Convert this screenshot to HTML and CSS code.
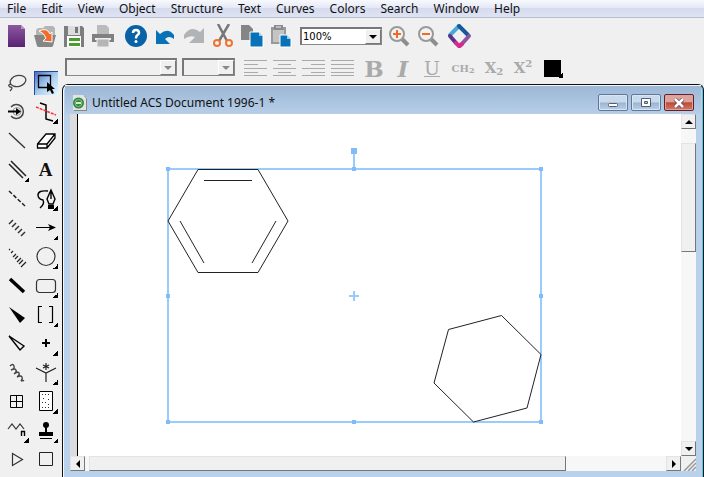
FILE: index.html
```html
<!DOCTYPE html>
<html lang="en">
<head>
  <meta charset="utf-8">
  <title>Untitled ACS Document 1996-1</title>
  <link rel="stylesheet" href="styles.css">
</head>
<body>
  <nav class="menu">
    <a href="#">File</a>
    <a href="#">Edit</a>
    <a href="#">View</a>
    <a href="#">Object</a>
    <a href="#">Structure</a>
    <a href="#">Text</a>
    <a href="#">Curves</a>
    <a href="#">Colors</a>
    <a href="#">Search</a>
    <a href="#">Window</a>
    <a href="#">Help</a>
  </nav>

  <div class="toolbar">
    <button aria-label="New"><svg width="24" height="24" viewBox="0 0 24 24"><defs><linearGradient id="purple" x2="0" y2="1"><stop offset="0" stop-color="#8a5a9f"/><stop offset="1" stop-color="#5a2173"/></linearGradient></defs><path d="M4 1h13l4 4v18H4z" fill="url(#purple)"/><path d="M17 1v4h4z" fill="#b493c2"/></svg></button>
    <button aria-label="Open"><svg width="24" height="24" viewBox="0 0 24 24"><path d="M3 11V6l2-2h5l2-2h8l2 2v7" fill="#b5b5b5"/><path d="M1 11h22l-3 11q0 1-2 1H6q-2 0-2-1z" fill="#868686"/><path d="M6 7q8-4 11 3l2-2v10l-9-1 3-3q-2-5-7-7z" fill="#f26b2a" stroke="#fff"/></svg></button>
    <button aria-label="Save"><svg width="24" height="24" viewBox="0 0 24 24"><path d="M2 2h18l2 2v19H2z" fill="#7d7d7d"/><path d="M6 2h12v9H6z" fill="#ddd"/><path d="M13 3h3v6h-3z" fill="#777"/><path d="M5 12h14v11H5z" fill="#fff"/><path d="M7 14h11v3H7zM7 19h11v3H7z" fill="#4b9b2e"/></svg></button>
    <button aria-label="Print"><svg width="24" height="24" viewBox="0 0 24 24"><path d="M6 1h9l3 3v6H6z" fill="#bbb"/><path d="M1 10h22v8H1z" fill="#808080"/><path d="M4 14h16v2H4z" fill="#eee"/><path d="M6 15h12v8H6z" fill="#b5b5b5" stroke="#eee"/></svg></button>
    <button class="push" aria-label="Help"><svg width="24" height="24" viewBox="0 0 24 24"><circle cx="12" cy="12" r="11" fill="#0862a5"/><path d="M9 9q0-3 3-3t3 3q0 1-1.500 2T12 14.500" fill="none" stroke="#fff" stroke-width="2.500"/><circle cx="12" cy="17.500" r="1.500" fill="#fff"/></svg></button>
    <button aria-label="Undo"><svg width="24" height="24" viewBox="0 0 24 24"><path d="M3 6l4 4q8-7 14 1v4q-5-4-9 0l5 5H3z" fill="#0872b8"/></svg></button>
    <button aria-label="Redo"><svg width="24" height="24" viewBox="0 0 24 24"><path d="M22 4l-4 4Q9 1 2 11v4q6-4 11-2l-6 6h15z" fill="#b0b4b6"/></svg></button>
    <button aria-label="Cut"><svg width="24" height="24" viewBox="0 0 24 24"><path d="M7 0l9 17M18 0L8 17" stroke="#777" stroke-width="2.500"/><g fill="none" stroke="#f17332" stroke-width="2"><circle cx="6" cy="19" r="3"/><circle cx="18" cy="19" r="3"/></g></svg></button>
    <button aria-label="Copy"><svg width="24" height="24" viewBox="0 0 24 24"><path d="M1 1h8l4 4v11H1z" fill="#858585"/><path d="M10 8h9l4 4v11H10z" fill="#0872b8" stroke="#fff"/><path d="M19 8v4h4z" fill="#9ccce9"/></svg></button>
    <button aria-label="Paste"><svg width="24" height="24" viewBox="0 0 24 24"><path d="M2 3h15v17H2z" fill="#999"/><path d="M4 6h11v12H4z" fill="#c4c4c4"/><path d="M5 1h9v5H5z" fill="#8a8a8a"/><path d="M7 3h5" stroke="#eee"/><path d="M11 11h7l4 4v8H11z" fill="#0872b8" stroke="#fff"/><path d="M18 11v4h4z" fill="#9ccce9"/></svg></button>
    <div class="combo zoom"><input aria-label="Zoom" value="100%"><button aria-label="Zoom levels"><svg width="8" height="4" viewBox="0 0 8 4"><path d="M0 0h8L4 4z"/></svg></button></div>
    <button aria-label="Zoom in"><svg width="24" height="24" viewBox="0 0 24 24"><path d="M15 15l6 6" stroke="#8d8d8d" stroke-width="4"/><circle cx="10" cy="10" r="7" fill="#f2f2f2" stroke="#999" stroke-width="2"/><path d="M6 10h8M10 6v8" stroke="#f06b27" stroke-width="2"/></svg></button>
    <button aria-label="Zoom out"><svg width="24" height="24" viewBox="0 0 24 24"><path d="M15 15l6 6" stroke="#8d8d8d" stroke-width="4"/><circle cx="10" cy="10" r="7" fill="#f2f2f2" stroke="#999" stroke-width="2"/><path d="M6 10h8" stroke="#f06b27" stroke-width="2"/></svg></button>
    <button aria-label="Online"><svg width="28" height="26" viewBox="0 0 28 26"><g fill="none" stroke-width="4" stroke-linecap="round" stroke-linejoin="round"><path d="M5 12l9-9" stroke="#49a8d8"/><path d="M14 3l9 9" stroke="#17579e"/><path d="M24 13l-9 10" stroke="#9055a0"/><path d="M5 13l6 7" stroke="#5b318a"/><path d="M11 20l3 3 3-2" stroke="#d42b8c"/></g></svg></button>
  </div>

  <div class="main">
    <aside class="palette">
      <button aria-label="Lasso"><svg width="24" height="24" viewBox="0 0 24 24"><g fill="none" stroke="#444" stroke-width="1.300"><ellipse cx="13" cy="10" rx="8" ry="5.500" transform="rotate(-15 13 10)"/><path d="M6 13q-4 1-1 3 4 0 0 4"/></g></svg></button>
      <button class="on" aria-label="Marquee"><svg width="24" height="24" viewBox="0 0 24 24"><path d="M4.500 4.500h12v12h-12z" fill="none" stroke="#000" stroke-width="1.300"/><path d="M13 11v10l3-2 2 4 2-1-2-4h3z"/></svg></button>
      <button aria-label="Rotate 3D"><svg width="24" height="24" viewBox="0 0 24 24"><path d="M6 7a7 7 0 1 1 0 9" fill="none" stroke="#444" stroke-width="1.500"/><circle cx="12" cy="11.500" r="4" fill="none" stroke="#999"/><path d="M3 11.500h9" stroke="#000" stroke-width="2"/><path d="M11 8l5 3.500-5 3.500z"/></svg></button>
      <button class="more" aria-label="Fragmentation"><svg width="24" height="24" viewBox="0 0 24 24"><path d="M6 3l6 2v14l7 2" fill="none" stroke="#000" stroke-width="1.500"/><path d="M2 7l20 8" stroke="#f33" stroke-width="1.500" stroke-dasharray="3 1"/></svg></button>
      <button aria-label="Solid bond"><svg width="24" height="24" viewBox="0 0 24 24"><path d="M4 4l16 15" stroke="#333" stroke-width="1.400"/></svg></button>
      <button aria-label="Eraser"><svg width="24" height="24" viewBox="0 0 24 24"><path d="M3.500 15L12 5h9v4l-8 10H3.500zM3.500 15H13v4M13 15l8-10" fill="#fff" stroke="#000" stroke-width="1.300"/></svg></button>
      <button class="more" aria-label="Multiple bonds"><svg width="24" height="24" viewBox="0 0 24 24"><path d="M4 6l14 14M6 3l15 15" stroke="#222" stroke-width="1.500"/></svg></button>
      <button class="letter" aria-label="Text">A</button>
      <button aria-label="Dashed bond"><svg width="24" height="24" viewBox="0 0 24 24"><path d="M4 4l16 15" stroke="#222" stroke-width="1.500" stroke-dasharray="4 2"/></svg></button>
      <button class="more" aria-label="Pen"><svg width="24" height="24" viewBox="0 0 24 24"><path d="M14 4Q4 3 4 8q0 4 5 5 2 4-3 8M17 3l4 9-2 5h-4l-2-5zM17 3v9" fill="none" stroke="#000" stroke-width="1.400"/><path d="M14 18h6v4h-6z"/></svg></button>
      <button aria-label="Hashed bond"><svg width="24" height="24" viewBox="0 0 24 24"><path d="M8 4L4 8M11 7l-4 4M14 10l-4 4M17 13l-4 4M20 16l-4 4" stroke="#333" stroke-width="1.500"/></svg></button>
      <button class="more" aria-label="Arrow"><svg width="24" height="24" viewBox="0 0 24 24"><path d="M2 11.500h14" stroke="#000"/><path d="M14 8l8 3.500-8 3.500 2-3.500z"/></svg></button>
      <button aria-label="Hashed wedged bond"><svg width="24" height="24" viewBox="0 0 24 24"><path d="M5 4L4 5M8 6L6 8M11 9l-3 3M13 11l-3 3M16 13l-4 4M18 15l-4 4M21 17l-5 5" stroke="#222" stroke-width="1.200"/></svg></button>
      <button class="more" aria-label="Orbital"><svg width="24" height="24" viewBox="0 0 24 24"><circle cx="12" cy="11.500" r="9" fill="none" stroke="#333" stroke-width="1.200"/></svg></button>
      <button aria-label="Bold bond"><svg width="24" height="24" viewBox="0 0 24 24"><path d="M5 5l14 13" stroke="#000" stroke-width="3.500"/></svg></button>
      <button class="more" aria-label="Drawing elements"><svg width="24" height="24" viewBox="0 0 24 24"><rect x="2.500" y="5.500" width="19" height="13" rx="3" fill="none" stroke="#333" stroke-width="1.200"/></svg></button>
      <button aria-label="Wedged bond"><svg width="24" height="24" viewBox="0 0 24 24"><path d="M4 4l16 11-5 5z"/></svg></button>
      <button class="more" aria-label="Brackets"><svg width="24" height="24" viewBox="0 0 24 24"><path d="M8 3.500H4.500v16H8M15 3.500h3.500v16H15" fill="none" stroke="#000" stroke-width="1.200"/></svg></button>
      <button aria-label="Hollow wedged bond"><svg width="24" height="24" viewBox="0 0 24 24"><path d="M4 4l15 10-4 4z" fill="none" stroke="#000" stroke-width="1.400"/></svg></button>
      <button class="more" aria-label="Chemical symbols"><svg width="24" height="24" viewBox="0 0 24 24"><path d="M8 11h8M12 7v8" stroke="#000" stroke-width="2"/></svg></button>
      <button aria-label="Wavy bond"><svg width="24" height="24" viewBox="0 0 24 24"><path d="M5 5q3-3 4 0t-3 4q4-2 5 0t-2 4q4-3 5-1t-2 4q4-2 5 0t-1 4q2-1 3 0" fill="none" stroke="#444" stroke-width="1.400"/></svg></button>
      <button class="more" aria-label="Query tools"><svg width="24" height="24" viewBox="0 0 24 24"><path d="M2 7l10 5 10-5M12 12v9M12 2v7M9 4l6 3M15 4L9 7" fill="none" stroke="#222" stroke-width="1.200"/></svg></button>
      <button aria-label="Table"><svg width="24" height="24" viewBox="0 0 24 24"><path d="M5.500 5.500h12v12h-12zM11.500 5v12M5 11.500h12" fill="none" stroke="#000"/></svg></button>
      <button class="more" aria-label="Plate"><svg width="24" height="24" viewBox="0 0 24 24"><path d="M5.500 1.500h13v19h-13z" fill="#fff" stroke="#000"/><path d="M8 4.500h9M8 17.500h8M9 8.500h3M14 9.500h3M8 12.500h5M14 14.500h3" stroke="#333" stroke-dasharray="1 2"/></svg></button>
      <button class="more" aria-label="Acyclic chain"><svg width="24" height="24" viewBox="0 0 24 24"><path d="M3 10l4-5 4 5 4-5 4 5" fill="none" stroke="#333" stroke-width="1.200"/><path d="M16.500 17v-5M16 12.500h3.500V17" fill="none" stroke="#000" stroke-width="1.400"/></svg></button>
      <button class="more" aria-label="Templates"><svg width="24" height="24" viewBox="0 0 24 24"><circle cx="12" cy="6" r="3"/><path d="M11 7h2v6h6v4H5v-4h6z"/><path d="M6 19.500h12" stroke="#000"/></svg></button>
      <button aria-label="Play"><svg width="24" height="24" viewBox="0 0 24 24"><path d="M7.500 5.500l10 6-10 6z" fill="none" stroke="#333" stroke-width="1.200"/></svg></button>
      <button aria-label="Square"><svg width="24" height="24" viewBox="0 0 24 24"><path d="M5.500 4.500h13v13h-13z" fill="none" stroke="#222"/></svg></button>
    </aside>

    <div class="work">
      <div class="format">
        <div class="combo font"><input aria-label="Font" disabled><button aria-label="Fonts" disabled><svg width="8" height="4" viewBox="0 0 8 4"><path d="M0 0h8L4 4z"/></svg></button></div>
        <div class="combo size"><input aria-label="Font size" disabled><button aria-label="Sizes" disabled><svg width="8" height="4" viewBox="0 0 8 4"><path d="M0 0h8L4 4z"/></svg></button></div>
        <div class="align">
          <button aria-label="Align left"><svg width="23" height="18" viewBox="0 0 23 18"><path d="M0 1.500h23M0 5.500h14M0 9.500h23M0 13.500h14M0 16.500h23"/></svg></button>
          <button aria-label="Center"><svg width="23" height="18" viewBox="0 0 23 18"><path d="M0 1.500h23M5 5.500h13M0 9.500h23M5 13.500h13M0 16.500h23"/></svg></button>
          <button aria-label="Align right"><svg width="23" height="18" viewBox="0 0 23 18"><path d="M0 1.500h23M9 5.500h14M0 9.500h23M9 13.500h14M0 16.500h23"/></svg></button>
          <button aria-label="Justify"><svg width="23" height="18" viewBox="0 0 23 18"><path d="M0 1.500h23M0 5.500h23M0 9.500h23M0 13.500h23M0 16.500h23"/></svg></button>
        </div>
        <div class="styles">
          <button class="big"><b>B</b></button>
          <button class="big"><i>I</i></button>
          <button class="under"><u>U</u></button>
          <button class="formula">CH<small>2</small></button>
          <button>X<sub>2</sub></button>
          <button>X<sup>2</sup></button>
          <button class="color more" aria-label="Color"><span></span></button>
        </div>
      </div>

      <section class="window">
        <header class="title">
          <svg width="15" height="16" viewBox="0 0 15 16"><path d="M2 1h11l2 3v12H2z" fill="#888"/><path d="M1 0h10l3 3v12H1z" fill="#e3e3e3"/><circle cx="6.500" cy="8" r="5.500" fill="#30883b"/><circle cx="6.500" cy="8" r="3.500" fill="none" stroke="#8bc48c"/><path d="M4 8h5" stroke="#d5ecd2" stroke-width="2"/></svg>
          <h1>Untitled ACS Document 1996-1 *</h1>
          <button aria-label="Minimize"><svg width="12" height="10" viewBox="0 0 12 10"><rect x="1.500" y="5.500" width="9" height="3" rx="1" fill="#fff" stroke="#555e70"/></svg></button>
          <button aria-label="Maximize"><svg width="12" height="10" viewBox="0 0 12 10"><path d="M1.500.500h9v8h-9zM4.500 3.500h3v2h-3z" fill="#fff" fill-rule="evenodd" stroke="#555e70"/></svg></button>
          <button class="close" aria-label="Close"><svg width="12" height="10" viewBox="0 0 12 10"><path d="M2 1l8 8M10 1L2 9" stroke="#633e49" stroke-width="4"/><path d="M2 1l8 8M10 1L2 9" stroke="#fff" stroke-width="2.500"/></svg></button>
        </header>
        <div class="document">
          <div class="canvas">
            <svg width="603" height="342" viewBox="78 114 603 342">
              <g fill="none" stroke="#99cbfd" stroke-width="2">
                <path d="M168 169h373v253H168zM354 151v18M349 296h10M354 291v10"/>
              </g>
              <path d="M166 167h4v4h-4zM352 167h4v4h-4zM539 167h4v4h-4zM166 294h4v4h-4zM539 294h4v4h-4zM166 420h4v4h-4zM352 420h4v4h-4zM539 420h4v4h-4zM351 148h6v6h-6z" fill="#7fbcf8"/>
              <g fill="none" stroke="#222">
                <path d="M198 169.500h60l30 51.500-30 51.500h-60L168 221zM204 180.500h48M276 221l-24 42M180 221l24 42"/>
                <path d="M448.500 329.500l53-14 39.500 39-14 53.500-53.500 14-39.500-39z"/>
              </g>
            </svg>
          </div>
          <div class="scroll vertical">
            <button aria-label="Scroll up"><svg width="8" height="4" viewBox="0 0 8 4"><path d="M0 4h8L4 0z"/></svg></button>
            <div class="thumb"></div>
            <button aria-label="Scroll down"><svg width="8" height="4" viewBox="0 0 8 4"><path d="M0 0h8L4 4z"/></svg></button>
          </div>
          <div class="scroll horizontal">
            <button aria-label="Scroll left"><svg width="4" height="8" viewBox="0 0 4 8"><path d="M4 0v8L0 4z"/></svg></button>
            <div class="thumb"></div>
            <button aria-label="Scroll right"><svg width="4" height="8" viewBox="0 0 4 8"><path d="M0 0v8l4-4z"/></svg></button>
          </div>
          <svg class="grip" width="15" height="15" viewBox="0 0 15 15"><path d="M3 15L15 3M7 15l8-8M11 15l4-4" stroke="#999" stroke-width="1.500"/></svg>
        </div>
      </section>
    </div>
  </div>
</body>
</html>
```

FILE: styles.css
```css
* {
  box-sizing: border-box;
}
body {
  margin: 0;
  height: 100vh;
  display: flex;
  flex-direction: column;
  overflow: hidden;
  background: #f0f0f0;
  color: #111;
  font-family: "Noto Sans", sans-serif;
  font-size: 12px;
}
svg {
  display: block;
  flex: none;
}
button {
  display: flex;
  align-items: center;
  justify-content: center;
  padding: 0;
  border: 0;
  background: none;
  color: inherit;
  font: inherit;
}
.menu {
  flex: none;
  display: flex;
  gap: 15px;
  height: 18px;
  padding-left: 7px;
  line-height: 17px;
  background: linear-gradient(#f8f9fd, #e5e9f5 45%, #d5daee 50%, #dfe4f4);
  border-bottom: 1px solid #b9bdd0;
}
.menu a {
  color: #111;
  text-decoration: none;
}
.toolbar {
  flex: none;
  display: flex;
  align-items: center;
  gap: 5px;
  height: 36px;
  padding-left: 4px;
}
.toolbar .push {
  margin-left: 4px;
}
.combo {
  display: flex;
  height: 18px;
  border: 1px solid #888;
  border-top: 2px solid #777;
  border-left: 2px solid #777;
}
.combo input {
  flex: 1;
  min-width: 0;
  padding: 0 1px;
  border: 0;
  background: none;
  font-family: "DejaVu Sans", sans-serif;
  font-size: 10px;
}
.combo button {
  width: 16px;
  background: #f0f0f0;
  border: 1px solid #fff;
  border-right-color: #777;
  border-bottom-color: #777;
}
.combo button:disabled {
  fill: #888;
}
.zoom {
  width: 82px;
  margin-left: 2px;
  background: #fff;
}
.main {
  flex: 1;
  min-height: 0;
  display: flex;
}
.palette {
  flex: none;
  display: grid;
  grid-template-columns: 29px 29px;
  grid-auto-rows: 29px;
  place-items: center;
  width: 62px;
  padding: 14px 2px 0;
}
.palette button {
  width: 24px;
  height: 24px;
}
.palette .on {
  background: linear-gradient(135deg, #4c70c8, #a8cdf0 50%, #e8f8ff);
  border-top: 1px solid #234a96;
  border-left: 1px solid #234a96;
}
.palette .letter {
  font: bold 19px "Liberation Serif", serif;
}
.more {
  background: linear-gradient(135deg, transparent 50%, #000 50%) right bottom / 5px 5px no-repeat;
}
.work {
  flex: 1;
  min-width: 0;
  display: flex;
  flex-direction: column;
}
.format {
  flex: none;
  display: flex;
  gap: 5px;
  height: 30px;
  padding: 4px 0 0 3px;
  color: #aaa;
}
.font {
  width: 112px;
}
.size {
  width: 53px;
}
.align {
  display: flex;
  gap: 6px;
  height: 20px;
  margin-left: 4px;
  stroke: #aaa;
}
.styles {
  display: flex;
  align-items: center;
  gap: 1px;
  height: 20px;
  margin-left: 1px;
  font: bold 15px "DejaVu Serif", serif;
}
.styles button {
  width: 28px;
  height: 20px;
}
.styles .big {
  font-size: 23px;
}
.styles .under {
  font-size: 19px;
  font-weight: normal;
}
.styles .formula {
  width: 32px;
  font-size: 10px;
}
.formula small {
  font-size: 8px;
  line-height: 16px;
  align-self: flex-end;
}
.styles sub, .styles sup {
  font-size: 10px;
  line-height: 12px;
}
.styles sub {
  align-self: flex-end;
}
.styles sup {
  align-self: flex-start;
}
.styles .color {
  width: 21px;
  margin-left: 4px;
}
.color span {
  width: 17px;
  height: 17px;
  background: #000;
}
.window {
  flex: 1;
  min-height: 0;
  display: flex;
  flex-direction: column;
  padding: 0 7px 6px;
  border: 1px solid #111;
  border-bottom: 0;
  border-radius: 6px 6px 0 0;
  background: #b9d1ea;
  box-shadow: inset 1px 1px #f5faff, inset -1px 0 #48cbea;
}
.title {
  flex: none;
  display: flex;
  align-items: center;
  gap: 3px;
  height: 29px;
  margin: 0 -5px;
  padding: 5px 7px 0;
  background: linear-gradient(#9db7d5, #b6cee8);
  border-top: 1px solid #eef5fc;
}
.title h1 {
  flex: 1;
  margin: 0 0 0 2px;
  font-size: 12px;
  font-weight: normal;
}
.title button {
  width: 30px;
  height: 17px;
  border: 1px solid #5f7898;
  border-radius: 2px;
  background: linear-gradient(#c9daec 48%, #9ab4d1 52%, #b9d0e8);
  box-shadow: inset 0 0 0 1px #d9e7f4;
}
.title .close {
  border-color: #61202b;
  background: linear-gradient(#dda49b 45%, #bd4939 52%, #d47b65);
  box-shadow: inset 0 0 0 1px #dfa39b;
}
.document {
  flex: 1;
  min-height: 0;
  display: grid;
  grid-template-columns: 1fr 15px;
  grid-template-rows: 1fr 15px;
  background: #dcdcdc;
}
.canvas {
  min-width: 0;
  min-height: 0;
  margin-left: 7px;
  overflow: hidden;
  background: #fff;
  border-left: 1px solid #000;
}
.scroll {
  display: flex;
  background: #f7f7f7;
}
.scroll button, .thumb {
  border: 1px solid #e3e3e3;
  border-right-color: #777;
  border-bottom-color: #777;
  background: #f0f0f0;
}
.scroll button {
  flex: none;
  width: 15px;
  height: 15px;
}
.vertical {
  flex-direction: column;
}
.vertical .thumb {
  flex: 0 0 32%;
  margin: 14px 0 auto;
}
.horizontal .thumb {
  flex: 0 0 78%;
  margin: 0 auto 0 4px;
}
.grip {
  background: #f0f0f0;
}
```
